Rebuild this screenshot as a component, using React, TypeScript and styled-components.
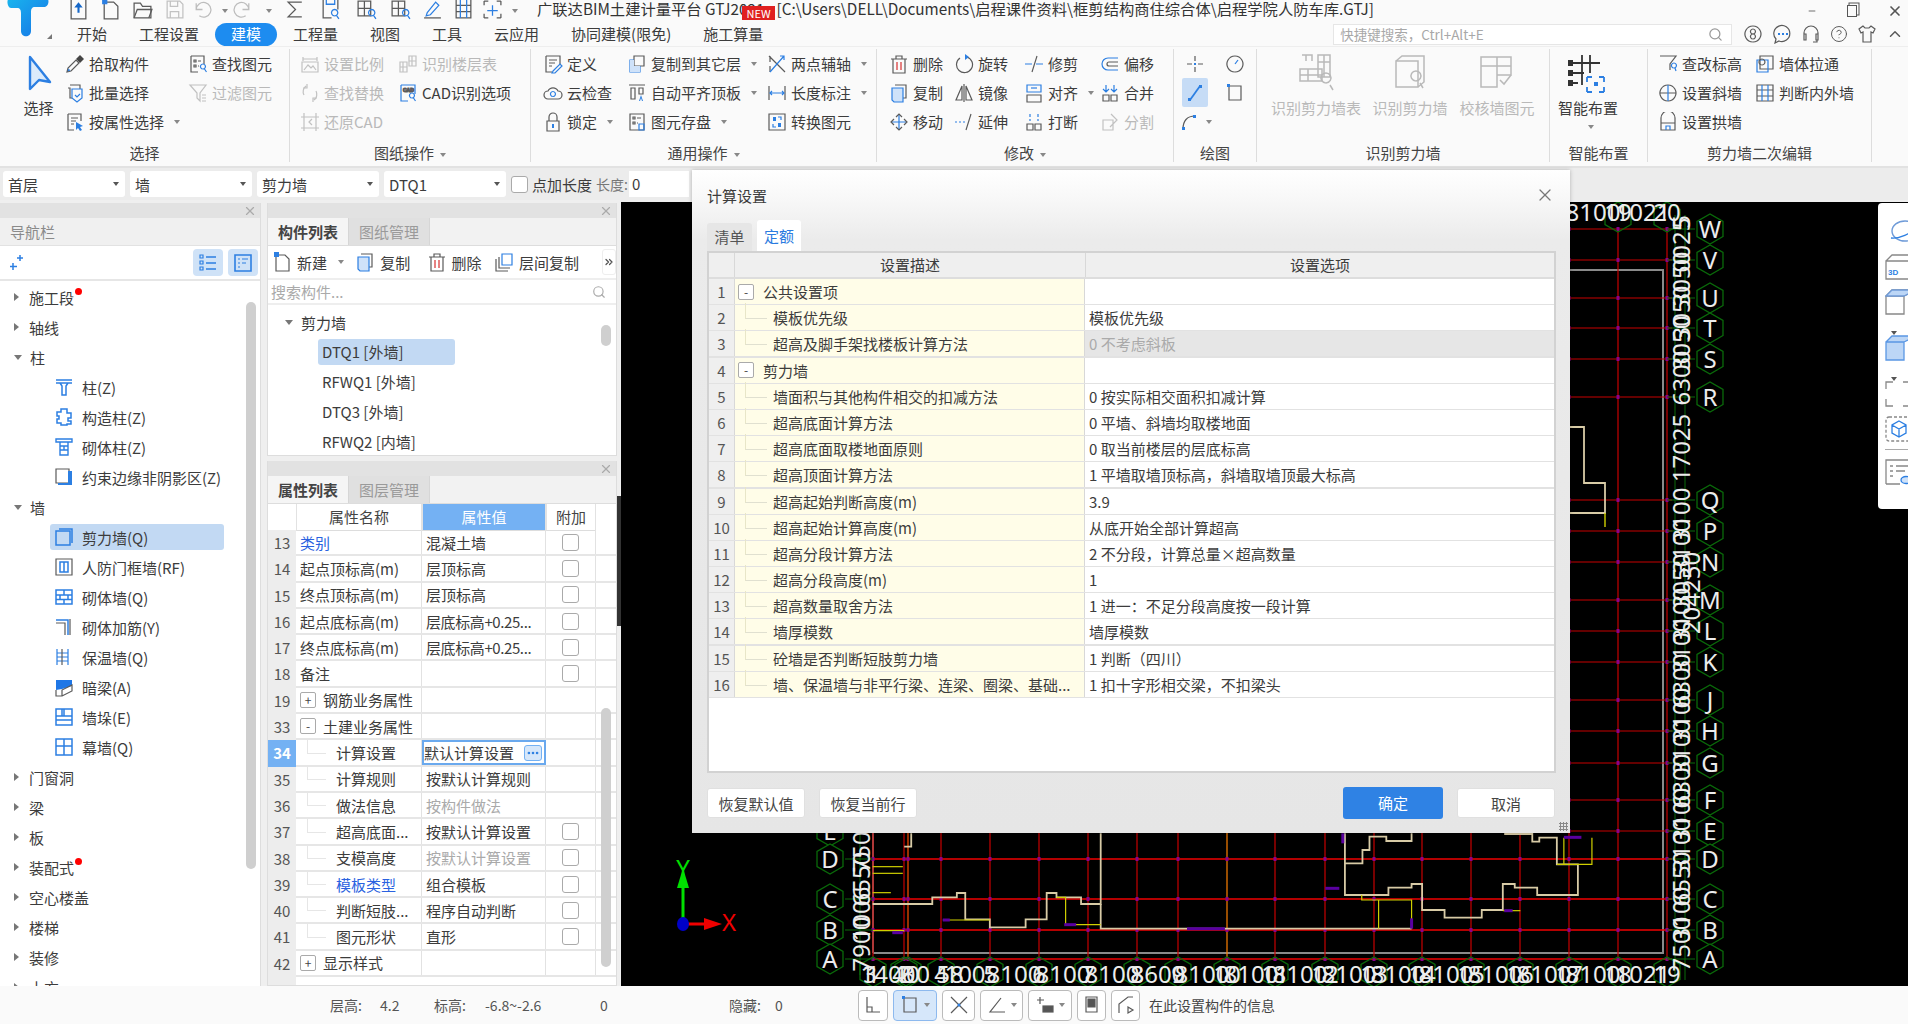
import React from 'react';
import styled, { createGlobalStyle } from 'styled-components';
import { X, Search, Minus, ChevronUp, HelpCircle, Ellipsis, ChevronsRight } from 'lucide-react';

const GRAY = '#5a5a5a';
const BLUE = '#2c7fe2';
const FONT = '"Noto Sans CJK SC", "Noto Sans", sans-serif';

const Global = createGlobalStyle`
    html, body { margin: 0; padding: 0; background: #efefef; }
    body { font-family: ${FONT}; color: #3c3c3c; font-size: 15px; }
    * { box-sizing: border-box; }
`;

const p = (d: string, c: string = GRAY, w?: number) => <path d={d} stroke={c} strokeWidth={w} />;
const f = (d: string, c: string = BLUE) => <path d={d} fill={c} stroke="none" />;

const icons: Record<string, React.ReactNode> = {
    pick: <>{p('M2 18l1-4 8-8 3 3-8 8z')}{f('M11 5l4-4 4 4-4 4z', '#444')}{f('M2.5 17.5l1-3 2 2z')}</>,
    batch: <>{p('M5 2h10v4M3 5h2v10h2')}{p('M7 6h10v9l-5 4-5-4z', BLUE)}{p('M10 12l2 2 3-3', BLUE)}</>,
    propSel: <>{p('M3 2h13v7M3 2v16h6M6 6h7M6 9h5M6 12h3')}{f('M11 10l7 4-3 1 2 3-2 1-2-3-2 2z')}</>,
    findEl: <>{p('M3 2h13v8M3 2v16h7M6 6h2v2H6zM6 11h2v2H6zM10 7h3M10 12h1')}{p('M15 15a2.5 2.5 0 1 0-.1 0M16.5 15l2 3', BLUE)}</>,
    filter: <>{p('M2 2h16l-6 8v8l-3-3v-5z')}{p('M14 12h4M14 15h4M14 18h4')}</>,
    scale: <>{p('M3 3v4M17 3v4M3 5h14M2 8h16v10H2zM4 16l4-5 3 3 2-2 3 4')}</>,
    layerTable: <>{p('M2 8h7v10H2zM2 13h7M5 8v10M11 2h7v10h-7zM11 7h7M14 2v10')}</>,
    replace: <>{p('M4 12a7 7 0 0 1 2-9M16 8a7 7 0 0 1-2 9M7 1v4H3M13 19v-4h4')}</>,
    cad: <>{p('M3 2h14v9M3 2v16h7', BLUE)}<text x="5" y="8.5" fontSize="5" fill={BLUE} fontFamily="Liberation Sans" fontWeight="700">CAD</text>{p('M14 15a2.5 2.5 0 1 0-.1 0M15.5 15l2 3', BLUE)}</>,
    restore: <>{p('M1 5h18M1 16h18M4 1v18M16 1v18M12 7l-3 3 3 3')}</>,
    define: <>{p('M3 2h14v8M3 2v16h6M6 6h8M6 9h6M6 12h3')}{p('M10 17l7-7 2 2-7 7-3 0z', BLUE)}</>,
    cloud: <>{p('M5 16a4 4 0 0 1 0-8 5.5 5.5 0 0 1 10 0 4 4 0 0 1 0 8z')}{p('M10 13.5a2.5 2.5 0 1 0-.1 0', BLUE)}</>,
    lock: <>{p('M4 9h12v10H4zM6 9V5a4 4 0 0 1 8 0v4')}{f('M9 12h2v4H9z')}</>,
    copyTo: <>{p('M7 2h10v10H7z')}{p('M7 6H3v12h10v-6', BLUE)}{f('M3 6h4v6h6v6H3z', '#cfe2f9')}</>,
    autoTop: <>{p('M2 2h16M4 5h4v11H4zM12 5h4v6h-4z')}{f('M12 18l2-6 2 6h-1l-1-3-1 3z')}</>,
    store: <>{p('M3 2h14v16H3zM6 5h2v2H6zM6 10h2v2H6zM10 6h4M10 11h1')}{p('M12 12h5v6h-5z', BLUE)}</>,
    axis: <>{p('M3 2v6M3 12v6M2 2l16 16', GRAY)}{p('M3 18L17 2M13 2h4v4', BLUE)}</>,
    measure: <>{p('M2 3v14M18 3v14')}{p('M3 10h14M5 8l-2 2 2 2M15 8l2 2-2 2', BLUE)}</>,
    convert: <>{p('M2 2h16v16H2z')}{f('M6 5h3v4H6zM11 11h3v4h-3z')}{p('M11 5h3v3M9 15H6v-3', BLUE)}</>,
    del: <>{p('M4 5h12v14H4zM2 5h16M7 5V2h6v3')}{p('M8 8v8M12 8v8', '#d83030')}</>,
    rotate: <>{p('M13 3a8 8 0 1 1-7 1', GRAY)}{f('M11 0l4 3-4 3z')}</>,
    trim: <>{p('M1 10h7M12 10h7', BLUE)}{p('M13 2L8 18')}</>,
    offset: <>{p('M18 4H8a6 6 0 0 0 0 12h10', BLUE)}{p('M18 8H9a2 2 0 0 0 0 4h9')}</>,
    copy: <>{p('M6 2h11v13h-3')}{f('M3 5h11v14H5l-2-2z', '#cfe2f9')}{p('M3 5h11v14H5l-2-2z', BLUE)}</>,
    mirror: <>{p('M10 1v18M8 3L2 17h6zM12 3l6 14h-6z')}</>,
    align: <>{p('M3 2h14v7H3z', BLUE)}{p('M3 12h14v7H3z')}{p('M7 5h6', BLUE)}</>,
    merge: <>{p('M3 12h6v6H3zM11 12h6v6h-6z')}{p('M6 2v6M14 2v6M3 6l3 3 3-3M11 6l3 3 3-3', BLUE)}</>,
    move: <>{p('M10 2v16M2 10h16', BLUE)}{p('M7 5l3-3 3 3M7 15l3 3 3-3M5 7l-3 3 3 3M15 7l3 3-3 3')}</>,
    extend: <>{p('M1 10h2M5 10h2M9 10h2', BLUE)}{p('M17 2l-5 16')}</>,
    breakAt: <>{p('M3 12h6v6H3zM11 12h6v6h-6z')}{p('M6 2v3M6 7v2M14 2v3M14 7v2', BLUE)}</>,
    split: <>{p('M3 8h10v10H3zM11 2l6 6-7 7')}</>,
    cross: <>{p('M10 2v5M10 13v5M2 10h5M13 10h5')}{f('M9 9h2v2H9z')}</>,
    clock: <>{p('M10 18a8 8 0 1 0-.1 0')}{p('M10 10l3-4', BLUE)}</>,
    line: <>{p('M5 17L15 3', BLUE, 1.8)}{f('M3 15h3v3H3zM14 2h3v3h-3z')}</>,
    rect: <>{p('M4 3h12v14H4z')}{f('M2 1h3v3H2z')}</>,
    arc: <>{p('M4 17C4 9 8 4 16 4', GRAY)}{f('M3 15h3v3H3zM14 3h3v3h-3z')}</>,
    changeElev: <>{p('M2 2h16l-6 8v6')}{p('M16 14a2.5 2.5 0 1 0-.1 0M17 14l1 3', BLUE)}</>,
    pullWall: <>{p('M5 2h13v13H5z')}{p('M2 6h11v12H2z', BLUE)}{p('M7 11a3 3 0 1 0-.1 0')}</>,
    slopeWall: <>{p('M10 18a8 8 0 1 0-.1 0M2 10h16')}{p('M10 2v16', BLUE)}</>,
    inOut: <>{p('M2 2h16v16H2zM2 7h16M2 13h16')}{p('M7 2v16M13 2v16', BLUE)}</>,
    arch: <>{p('M3 18V6a7 7 0 0 1 14 0v12zM3 11h14')}{p('M8 18v-4h4v4', BLUE)}</>,
    newDoc: <>{p('M4 3h9l4 4v12H4z')}{f('M2 0h5v5H2z')}</>,
    layerCopy: <>{p('M2 7v12h12')}{p('M5 5v11h11')}{p('M8 2h10v11H8z', BLUE)}</>,
    listView: <>{p('M8 4h10M8 10h10M8 16h10', BLUE, 1.6)}{p('M2 2h3v3H2zM2 8h3v3H2zM2 14h3v3H2z', BLUE)}</>,
    detailView: <>{p('M2 2h16v16H2z', BLUE, 1.6)}{p('M5 6h2M9 6h6M5 10h2M9 10h4M5 14h2', BLUE)}</>,
    spark: <>{p('M13 2v6M10 5h6M6 10v7M3 13.5h7', BLUE, 1.5)}</>,
    column: <>{p('M2 3h16M2 6h16M6 6l2 3v9h4V9l2-3', BLUE, 1.5)}</>,
    gear: <>{p('M7 2h6v4h4v5h-3v3h3v3h-4v1H7v-2H3v-4h2V9H3V5h4z', BLUE, 1.5)}</>,
    brick: <>{p('M2 2h16v3H2zM6 5h8v13H6zM6 9h8M6 13h8M10 9v4', BLUE, 1.4)}</>,
    edge: <>{p('M2 2h13v14H2z')}{f('M14 4h4v14H4v-2h10z')}</>,
    wall: <>{p('M5 2h13v14M2 4h14v14H2z', BLUE, 1.5)}</>,
    door: <>{p('M2 2h16v16H2z', GRAY)}{p('M6 5h8v10H6zM10 5v10', BLUE, 1.5)}</>,
    masonry: <>{p('M2 3h16v14H2zM2 8h16M2 12.5h16M10 3v5M6 8v4.5M14 8v4.5M10 12.5V17', BLUE, 1.5)}</>,
    rebar: <>{p('M2 3h12v15', BLUE, 1.5)}{p('M2 6h9v12M16 2v16', GRAY)}</>,
    insul: <>{p('M3 2v16M14 2v16M3 6h11M3 10h11M3 14h11', BLUE)}{p('M8 2v16', GRAY)}</>,
    beam: <>{f('M2 3h16v6L8 12l-6 1z', '#1f77e6')}{p('M2 13v6h6v-6l10-5v6l-10 5')}</>,
    pier: <>{p('M2 2h16v16H2zM2 9h16M2 13h16M10 2v7M8 2v7', BLUE, 1.5)}</>,
    curtain: <>{p('M2 2h16v16H2zM2 9h16M10 2v16', BLUE, 1.5)}</>,
    upload: <>{p('M3 0v19h14V0', GRAY)}{f('M10 3l4 5h-3v5H9V8H6z', '#1467c9')}</>,
    folder: <>{p('M2 4h6l2 3h8v11H2z')}{p('M2 18l3-8h14l-3 8')}</>,
    save: <>{p('M3 2h12l3 3v13H3zM6 2v5h7V2M6 18v-6h8v6', '#c2c2c2')}</>,
    undo: <>{p('M4 10a7 7 0 1 1 3 6M4 4v6h6', '#bdbdbd')}</>,
    redo: <>{p('M16 10a7 7 0 1 0-3 6M16 4v6h-6', '#bdbdbd')}</>,
    sigma: <>{p('M16 3H3l7 7-7 7h13')}</>,
    docSearch: <>{p('M3 0v18h8M17 0v10')}{p('M6 0h8v5H6z', BLUE)}{p('M14 16a3 3 0 1 0-.1 0M16 16l2 3', BLUE)}</>,
    gridSearch: <>{p('M2 2h12v14H2zM2 9h12M8 2v14')}{p('M15 16a3 3 0 1 0-.1 0M17 16l2 3', BLUE)}</>,
    pen: <>{p('M2 18h16')}{p('M5 13l8-10 3 3-8 9-4 1z', BLUE)}</>,
    film: <>{p('M3 0v18h14V0M3 6h14M3 12h14')}{p('M7 0v18M13 0v18', BLUE)}</>,
    dashPlus: <>{p('M2 2h4M14 2h4M2 18h4M14 18h4M2 2v4M18 2v4M2 14v4M18 14v4')}{p('M10 6v10M5 11h10', BLUE)}</>,
    badge: <>{p('M10 18a8 8 0 1 0-.1 0')}{p('M10 10a2.5 2.5 0 1 0-.1 0M10 15a2.5 2.5 0 1 0-.1 0')}</>,
    chat: <>{p('M4 15l-1 4 4-2a8 8 0 1 0-3-2z')}{f('M6 9h2v2H6zM10 9h2v2h-2zM14 9h2v2h-2z', BLUE)}</>,
    headset: <>{p('M3 13V9a7 7 0 0 1 14 0v4M3 10h2v6H3zM15 10h2v6h-2zM16 16v2h-4')}</>,
    shirt: <>{p('M6 2L2 5l2 4 2-1v10h8V8l2 1 2-4-4-3-2 2H8z')}</>,
};

const bigIcons: Record<string, React.ReactNode> = {
    wallTable: <>{p('M6 2h10v6M10 2v6M22 2h12v22H22zM22 9h12M28 2v22M4 16h22v12H4zM4 22h22M12 16v12')}{p('M30 30a5 5 0 1 0-.1 0M34 32l3 5')}</>,
    wallFind: <>{p('M6 8h22v26H6zM6 8l6-5h22v26l-6 5')}{p('M26 28a5 5 0 1 0-.1 0M30 30l3 5')}</>,
    wallCheck: <>{p('M4 4h30v18H20v12H4zM4 13h16M20 4v18M20 13h14')}{p('M23 27l4 4 7-9')}</>,
    smart: <>{p('M2 10h30M2 20h14M2 30h8M14 2v30M22 2v18', '#333', 1.8)}{f('M0 7h5v6H0zM0 17h5v6H0zM0 27h5v6H0z', '#333')}{p('M19 24h5M31 24h5M36 24v5M36 34v5M31 39h5M19 39h5M19 34v5M19 24v5', BLUE, 1.8)}{f('M26 29h4v4h-4z')}</>,
};

const Ico = ({ name, size = 20 }: { name: string; size?: number }): JSX.Element => (
    <svg width={size} height={size} viewBox="0 0 20 20" fill="none" stroke={GRAY} strokeWidth={1.2} style={{ flex: 'none' }}>
        {icons[name]}
    </svg>
);

const ribbon = [
    {
        label: '选择', w: 290, pad: 12,
        cols: [
            { w: 53, big: 'select', text: '选择' },
            { w: 123, items: [['pick', '拾取构件'], ['batch', '批量选择'], ['propSel', '按属性选择', 'caret']] },
            { w: 100, items: [['findEl', '查找图元'], ['filter', '过滤图元', 'off']] },
        ],
    },
    {
        label: '图纸操作', caret: true, w: 241, pad: 10,
        cols: [
            { w: 98, items: [['scale', '设置比例', 'off'], ['replace', '查找替换', 'off'], ['restore', '还原CAD', 'off']] },
            { w: 120, items: [['layerTable', '识别楼层表', 'off'], ['cad', 'CAD识别选项']] },
        ],
    },
    {
        label: '通用操作', caret: true, w: 346, pad: 12,
        cols: [
            { w: 84, items: [['define', '定义'], ['cloud', '云检查'], ['lock', '锁定', 'caret']] },
            { w: 140, items: [['copyTo', '复制到其它层', 'caret'], ['autoTop', '自动平齐顶板', 'caret'], ['store', '图元存盘', 'caret']] },
            { w: 100, items: [['axis', '两点辅轴', 'caret'], ['measure', '长度标注', 'caret'], ['convert', '转换图元']] },
        ],
    },
    {
        label: '修改', caret: true, w: 297, pad: 12,
        cols: [
            { w: 65, items: [['del', '删除'], ['copy', '复制'], ['move', '移动']] },
            { w: 70, items: [['rotate', '旋转'], ['mirror', '镜像'], ['extend', '延伸']] },
            { w: 76, items: [['trim', '修剪'], ['align', '对齐', 'caret'], ['breakAt', '打断']] },
            { w: 60, items: [['offset', '偏移'], ['merge', '合并'], ['split', '分割', 'off']] },
        ],
    },
];

const rightGroups = [
    {
        label: '识别剪力墙', w: 293, pad: 11,
        cols: [
            { w: 96, big: 'wallTable', text: '识别剪力墙表', off: true },
            { w: 92, big: 'wallFind', text: '识别剪力墙', off: true },
            { w: 82, big: 'wallCheck', text: '校核墙图元', off: true },
        ],
    },
    { label: '智能布置', w: 98, pad: 3, cols: [{ w: 70, big: 'smart', text: '智能布置', more: true }] },
    {
        label: '剪力墙二次编辑', w: 224, pad: 10,
        cols: [
            { w: 97, items: [['changeElev', '查改标高'], ['slopeWall', '设置斜墙'], ['arch', '设置拱墙']] },
            { w: 110, items: [['pullWall', '墙体拉通'], ['inOut', '判断内外墙']] },
        ],
    },
];

const navTree: [string, string, string?, boolean?][] = [
    ['root', '施工段', 'closed', true],
    ['root', '轴线', 'closed'],
    ['root', '柱', 'open'],
    ['column', '柱(Z)'],
    ['gear', '构造柱(Z)'],
    ['brick', '砌体柱(Z)'],
    ['edge', '约束边缘非阴影区(Z)'],
    ['root', '墙', 'open'],
    ['wall', '剪力墙(Q)', 'active'],
    ['door', '人防门框墙(RF)'],
    ['masonry', '砌体墙(Q)'],
    ['rebar', '砌体加筋(Y)'],
    ['insul', '保温墙(Q)'],
    ['beam', '暗梁(A)'],
    ['pier', '墙垛(E)'],
    ['curtain', '幕墙(Q)'],
    ['root', '门窗洞', 'closed'],
    ['root', '梁', 'closed'],
    ['root', '板', 'closed'],
    ['root', '装配式', 'closed', true],
    ['root', '空心楼盖', 'closed'],
    ['root', '楼梯', 'closed'],
    ['root', '装修', 'closed'],
    ['root', '土方', 'closed'],
];

type PropRow = { no: number; name: string; value?: string; check?: boolean; kind?: string; link?: boolean; dim?: boolean; sel?: boolean; tight?: boolean };

const propRows: PropRow[] = [
    { no: 13, name: '类别', value: '混凝土墙', check: true, link: true },
    { no: 14, name: '起点顶标高(m)', value: '层顶标高', check: true },
    { no: 15, name: '终点顶标高(m)', value: '层顶标高', check: true },
    { no: 16, name: '起点底标高(m)', value: '层底标高+0.25...', check: true, tight: true },
    { no: 17, name: '终点底标高(m)', value: '层底标高+0.25...', check: true, tight: true },
    { no: 18, name: '备注', check: true },
    { no: 19, name: '钢筋业务属性', kind: '+' },
    { no: 33, name: '土建业务属性', kind: '-' },
    { no: 34, name: '计算设置', value: '默认计算设置', kind: 'child', sel: true },
    { no: 35, name: '计算规则', value: '按默认计算规则', kind: 'child' },
    { no: 36, name: '做法信息', value: '按构件做法', kind: 'child', dim: true },
    { no: 37, name: '超高底面...', value: '按默认计算设置', kind: 'child', check: true },
    { no: 38, name: '支模高度', value: '按默认计算设置', kind: 'child', check: true, dim: true },
    { no: 39, name: '模板类型', value: '组合模板', kind: 'child', check: true, link: true },
    { no: 40, name: '判断短肢...', value: '程序自动判断', kind: 'child', check: true },
    { no: 41, name: '图元形状', value: '直形', kind: 'child', check: true },
    { no: 42, name: '显示样式', kind: '+' },
];

const calcRows: [string, string, string?][] = [
    ['公共设置项', '', 'group'],
    ['模板优先级', '模板优先级'],
    ['超高及脚手架找楼板计算方法', '0 不考虑斜板', 'off'],
    ['剪力墙', '', 'group'],
    ['墙面积与其他构件相交的扣减方法', '0 按实际相交面积扣减计算'],
    ['超高底面计算方法', '0 平墙、斜墙均取楼地面'],
    ['超高底面取楼地面原则', '0 取当前楼层的层底标高'],
    ['超高顶面计算方法', '1 平墙取墙顶标高，斜墙取墙顶最大标高'],
    ['超高起始判断高度(m)', '3.9'],
    ['超高起始计算高度(m)', '从底开始全部计算超高'],
    ['超高分段计算方法', '2 不分段，计算总量×超高数量'],
    ['超高分段高度(m)', '1'],
    ['超高数量取舍方法', '1 进一：不足分段高度按一段计算'],
    ['墙厚模数', '墙厚模数'],
    ['砼墙是否判断短肢剪力墙', '1 判断（四川）'],
    ['墙、保温墙与非平行梁、连梁、圈梁、基础...', '1 扣十字形相交梁，不扣梁头'],
];

// plan coordinates of the grid, in page pixels
const gridX = [873, 904, 908, 941, 990, 1039, 1088, 1137, 1178, 1227, 1275, 1325, 1374, 1422, 1471, 1520, 1569, 1618, 1667];
const gridY: [string, number][] = [
    ['W', 229], ['V', 260], ['U', 298], ['T', 328], ['S', 359], ['R', 397], ['Q', 500], ['P', 531], ['N', 562], ['M', 600],
    ['L', 631], ['K', 662], ['J', 700], ['H', 731], ['G', 763], ['F', 800], ['E', 831], ['D', 859], ['C', 899], ['B', 930], ['A', 959],
];
const bottomDims: [number, string][] = [
    [870, '3'], [888, '1400'], [906, '40'], [923, '0'], [950, '58'], [965, '100'], [1014, '8100'], [1063, '8100'], [1112, '8100'],
    [1158, '8600'], [1202, '8100'], [1251, '8100'], [1300, '8100'], [1349, '8100'], [1398, '8100'], [1446, '8100'], [1495, '8100'],
    [1544, '8100'], [1593, '8100'], [1643, '1021'],
];
const rightDims: [number, string][] = [
    [222, '5'], [245, '0025'], [279, '3050'], [313, '3050'], [343, '3050'], [378, '6300'], [448, '17025'], [515, '3100'],
    [546, '3100'], [581, '3050'], [615, '3100'], [646, '3100'], [681, '6300'], [715, '3100'], [747, '3100'], [781, '6300'],
    [815, '3100'], [845, '3100'], [879, '6550'], [914, '3100'], [944, '7500'],
];
const leftDims: [number, string][] = [[845, '7500'], [879, '6550'], [914, '1006'], [944, '7900']];

const toPoints = (pts: number[][]) => pts.map(([x, y]) => `${620 + x / 1.425},${820 + y / 3}`).join(' ');

const walls = [
    [[360, 252], [445, 252], [445, 232], [480, 232], [480, 219], [492, 219], [492, 298], [527, 298], [527, 322], [578, 322], [578, 298], [608, 298], [608, 219], [622, 219], [622, 232], [657, 232], [657, 252], [685, 252], [685, 40]],
    [[685, 252], [685, 326], [1128, 326]],
    [[1033, 40], [1033, 225], [1095, 225], [1095, 203], [1128, 203], [1128, 192], [1143, 192], [1143, 270], [1175, 270], [1175, 293], [1228, 293], [1228, 270], [1258, 270], [1258, 192], [1275, 192], [1275, 203], [1307, 203], [1307, 225], [1365, 225], [1365, 133], [1335, 133], [1335, 53], [1310, 53], [1310, 65], [1300, 65], [1300, 42], [1260, 42]],
    [[1033, 130], [1058, 130], [1058, 90], [1068, 90], [1068, 50], [1092, 50], [1092, 63], [1128, 63], [1128, 40]],
    [[415, 40], [415, 80], [405, 80]],
];
const yellows = [
    [[360, 140], [403, 140]], [[360, 160], [403, 160]], [[360, 218], [386, 218]], [[360, 332], [405, 332]],
    [[1057, 225], [1057, 240], [1128, 240], [1128, 326]], [[1081, 240], [1081, 326]], [[622, 232], [635, 232], [635, 314], [685, 314]],
    [[1345, 53], [1345, 133]], [[1385, 53], [1385, 133], [1335, 133]], [[460, 300], [527, 300]], [[1258, 272], [1283, 272]],
];
const purples = [
    [[808, 326], [862, 326]], [[633, 314], [650, 314]], [[1005, 205], [1025, 205]], [[388, 338], [403, 338]], [[460, 300], [470, 300]],
    [[1345, 52], [1370, 52]], [[1260, 272], [1272, 272]], [[1128, 295], [1128, 326]], [[1030, 40], [1030, 70]],
];

const hexPoints = (cx: number, cy: number, r = 15) =>
    [0, 60, 120, 180, 240, 300].map(a => {
        const t = ((a + 30) * Math.PI) / 180;
        return `${cx + r * Math.cos(t)},${cy + r * Math.sin(t)}`;
    }).join(' ');

const Drawing = (): JSX.Element => (
    <CanvasSvg viewBox="621 202 1287 784" width="1287" height="784" fill="none">
        <polyline points="873,953 873,270 1663,270 1663,953 873,953" stroke="#8a8a8a" strokeWidth="2" />
        {gridY.map(([, y]) => (
            <line key={y} x1="873" x2="1672" y1={y} y2={y} stroke={y > 850 ? '#f00000' : '#c80000'} strokeWidth={y > 850 ? 1.6 : 1.2} />
        ))}
        {gridX.map((x, i) => (
            <line key={x} x1={x} x2={x} y1="229" y2="959" stroke={i === 2 ? '#ff5000' : i === 9 ? '#ff8000' : '#c80000'} strokeWidth="1.2" />
        ))}
        {gridX.flatMap(x => gridY.map(([, y]) => (
            <rect key={`${x}-${y}`} x={x - 1.5} y={y - 2} width="3" height="4" fill="#8a008a" />
        )))}
        {walls.map((w, i) => <polyline key={i} points={toPoints(w)} stroke="#d8cba6" strokeWidth="1.8" />)}
        <polyline points="1570,427 1584,427 1584,483 1605,483 1605,513 1570,513" stroke="#d8cba6" strokeWidth="1.8" />
        <polyline points="1605,513 1605,527" stroke="#d0d000" strokeWidth="1.4" />
        {yellows.map((w, i) => <polyline key={i} points={toPoints(w)} stroke="#d0d000" strokeWidth="1.2" />)}
        {purples.map((w, i) => <polyline key={i} points={toPoints(w)} stroke="#5a00a0" strokeWidth="3" />)}

        <line x1="1675" x2="1675" y1="215" y2="980" stroke="#0a6a0a" />
        <line x1="1685" x2="1685" y1="215" y2="980" stroke="#0a6a0a" />
        <line x1="860" x2="860" y1="835" y2="975" stroke="#0a6a0a" />
        {gridY.map(([name, y]) => (
            <g key={name}>
                <line x1="1667" x2="1695" y1={y} y2={y} stroke="#0a6a0a" />
                <polygon points={hexPoints(1710, y)} stroke="#0a6a0a" strokeWidth="1.3" fill="#000" />
                <AxisText x="1710" y={y + 9} textAnchor="middle">{name}</AxisText>
                {y > 820 && (
                    <>
                        <line x1="845" x2="873" y1={y} y2={y} stroke="#0a6a0a" />
                        <polygon points={hexPoints(830, y)} stroke="#0a6a0a" strokeWidth="1.3" fill="#000" />
                        <AxisText x="830" y={y + 9} textAnchor="middle">{name}</AxisText>
                    </>
                )}
            </g>
        ))}
        {gridX.map((x, i) => (
            <g key={x}>
                <polygon points={hexPoints(x, 972)} stroke="#0a6a0a" strokeWidth="1.3" />
                <AxisText x={x} y="983" textAnchor="middle">{i + 1}</AxisText>
                {x > 1570 && (
                    <>
                        <polygon points={hexPoints(x, 217)} stroke="#0a6a0a" strokeWidth="1.3" />
                        <AxisText x={x} y="221" textAnchor="middle">{i + 2}</AxisText>
                    </>
                )}
            </g>
        ))}
        {bottomDims.map(([x, t], i) => <AxisText key={i} x={x} y="983" textAnchor="middle">{t}</AxisText>)}
        <AxisText x="1593" y="221" textAnchor="middle">8100</AxisText>
        <AxisText x="1643" y="221" textAnchor="middle">1021</AxisText>
        {rightDims.map(([y, t]) => (
            <AxisText key={y} transform={`translate(1690 ${y}) rotate(-90)`} textAnchor="middle">{t}</AxisText>
        ))}
        <AxisText transform="translate(1700 593) rotate(-90)" textAnchor="middle">204250</AxisText>
        {leftDims.map(([y, t]) => (
            <AxisText key={y} transform={`translate(870 ${y}) rotate(-90)`} textAnchor="middle">{t}</AxisText>
        ))}

        <line x1="683" x2="683" y1="885" y2="925" stroke="#00e000" strokeWidth="3" />
        <polygon points="683,868 677,888 689,888" fill="#00e000" />
        <line x1="683" x2="708" y1="924" y2="924" stroke="#f00000" strokeWidth="3" />
        <polygon points="722,924 704,918 704,930" fill="#f00000" />
        <ellipse cx="683" cy="924" rx="6" ry="7" fill="#0000c8" />
        <AxisLetter x="683" y="877" fill="#00e000" textAnchor="middle">Y</AxisLetter>
        <AxisLetter x="729" y="931" fill="#f00000" textAnchor="middle">X</AxisLetter>
    </CanvasSvg>
);

const RibbonCol = ({ col }: { col: any }): JSX.Element => {
    if (col.big) {
        return (
            <BigBtn $w={col.w} $off={col.off}>
                <BigIconSlot>
                    {col.big === 'select' ? (
                        <svg width="30" height="36" viewBox="0 0 30 36">
                            <path d="M6 2l20 25-11-2-9 9z" fill="#dcebfb" stroke={BLUE} strokeWidth="2.4" strokeLinejoin="round" />
                        </svg>
                    ) : (
                        <svg width="40" height="40" viewBox="0 0 40 40" fill="none" stroke={GRAY} strokeWidth={1.5}>
                            {bigIcons[col.big]}
                        </svg>
                    )}
                </BigIconSlot>
                <span>{col.text}</span>
                {col.more && <MoreCaret><Caret /></MoreCaret>}
            </BigBtn>
        );
    }
    return (
        <Col $w={col.w}>
            {col.items.map(([icon, text, flag]: string[]) => (
                <Item key={text} $off={flag === 'off'}>
                    <Ico name={icon} />
                    <span>{text}</span>
                    {flag === 'caret' && <Caret />}
                </Item>
            ))}
        </Col>
    );
};

const RibbonGroup = ({ g }: { g: any }): JSX.Element => (
    <Group $w={g.w}>
        <GroupBody $pad={g.pad}>
            {g.cols.map((c: any, i: number) => <RibbonCol key={i} col={c} />)}
        </GroupBody>
        <GroupLabel>{g.label}{g.caret && <Caret />}</GroupLabel>
    </Group>
);

const qat: [string, number][] = [
    ['upload', 32], ['newDoc', 32], ['folder', 32], ['save', 32], ['undo', 24], ['', 16], ['redo', 24], ['', 24],
    ['sigma', 34], ['docSearch', 36], ['gridSearch', 36], ['gridSearch', 32], ['pen', 32], ['film', 30], ['dashPlus', 28],
];

const menus = ['开始', '工程设置', '建模', '工程量', '视图', '工具', '云应用', '协同建模(限免)', '施工算量'];

const App = (): JSX.Element => (
    <Page>
        <Global />
        <Head>
            <LogoCol>
                <svg width="44" height="38" viewBox="0 0 44 38">
                    <defs>
                        <linearGradient id="logoGrad" x1="0" y1="0" x2="1" y2="1">
                            <stop offset="0" stopColor="#19b5ee" />
                            <stop offset="1" stopColor="#1673e6" />
                        </linearGradient>
                    </defs>
                    <path d="M3 -2h36c4 0 3 9-2 9H28c-3 0-4 2-4 5v19c0 7-10 7-10 0V13c0-3-1-5-4-5H4C0 8-1-2 3-2z" fill="url(#logoGrad)" />
                </svg>
                <LogoMark />
            </LogoCol>
            <HeadRows>
                <TitleRow>
                    <Qat>
                        {qat.map(([name, w], i) => (
                            <QatSlot key={i} $w={w}>{name ? <Ico name={name} size={21} /> : <Caret />}</QatSlot>
                        ))}
                        <Caret />
                    </Qat>
                    <Title>广联达BIM土建计量平台 GTJ2021 - [C:\Users\DELL\Documents\启程课件资料\框剪结构商住综合体\启程学院人防车库.GTJ]</Title>
                    <NewBadge>NEW</NewBadge>
                    <WindowBtns>
                        <Minus size={10} />
                        <RestoreIcon />
                        <X size={16} strokeWidth={2.5} />
                    </WindowBtns>
                </TitleRow>
                <MenuRow>
                    {menus.map(m => <MenuTab key={m} $on={m === '建模'}>{m}</MenuTab>)}
                    <KeySearch>
                        快捷键搜索，Ctrl+Alt+E
                        <Search size={15} color="#999" />
                    </KeySearch>
                    <HelpIcons>
                        <Ico name="badge" />
                        <Ico name="chat" />
                        <Ico name="headset" />
                        <HelpCircle size={18} color={GRAY} strokeWidth={1.3} />
                        <Ico name="shirt" />
                        <ChevronUp size={18} color={GRAY} />
                    </HelpIcons>
                </MenuRow>
            </HeadRows>
        </Head>

        <Ribbon>
            {ribbon.map(g => <RibbonGroup key={g.label} g={g} />)}
            <Group $w={83}>
                <DrawGrid>
                    <DrawBtn><Ico name="cross" /></DrawBtn>
                    <DrawBtn><Ico name="clock" /></DrawBtn>
                    <DrawBtn $on><Ico name="line" /></DrawBtn>
                    <DrawBtn><Ico name="rect" /></DrawBtn>
                    <DrawBtn><Ico name="arc" /><Caret /></DrawBtn>
                </DrawGrid>
                <GroupLabel>绘图</GroupLabel>
            </Group>
            {rightGroups.map(g => <RibbonGroup key={g.label} g={g} />)}
        </Ribbon>

        <FilterBar>
            <Select>首层<Caret $dark /></Select>
            <Select>墙<Caret $dark /></Select>
            <Select>剪力墙<Caret $dark /></Select>
            <Select>DTQ1<Caret $dark /></Select>
            <CheckBox />
            <PointLabel>点加长度</PointLabel>
            <LengthLabel>长度:</LengthLabel>
            <LengthValue>0</LengthValue>
        </FilterBar>

        <Work>
            <NavPanel>
                <PanelBar><X size={14} color="#aaa" /></PanelBar>
                <NavTitle>导航栏</NavTitle>
                <NavTools>
                    <Ico name="spark" />
                    <NavToolBtn $first><Ico name="listView" /></NavToolBtn>
                    <NavToolBtn><Ico name="detailView" /></NavToolBtn>
                </NavTools>
                <NavList>
                    {navTree.map(([icon, text, state, dot]) => (
                        icon === 'root' ? (
                            <NavRoot key={text}>
                                <Arrow $open={state === 'open'} />
                                {text}
                                {dot && <RedDot />}
                            </NavRoot>
                        ) : (
                            <NavChild key={text} $on={state === 'active'}>
                                <Ico name={icon} />
                                {text}
                            </NavChild>
                        )
                    ))}
                    <NavScroll />
                </NavList>
            </NavPanel>

            <MidCol>
                <CompPanel>
                    <PanelBar><X size={14} color="#aaa" /></PanelBar>
                    <Tabs>
                        <Tab $on>构件列表</Tab>
                        <Tab>图纸管理</Tab>
                    </Tabs>
                    <CompTools>
                        <CompTool $w={84}><Ico name="newDoc" />新建<Caret /></CompTool>
                        <CompTool $w={72}><Ico name="copy" />复制</CompTool>
                        <CompTool $w={68}><Ico name="del" />删除</CompTool>
                        <CompTool $w={102}><Ico name="layerCopy" />层间复制</CompTool>
                        <MoreBtn><ChevronsRight size={12} strokeWidth={2.5} /></MoreBtn>
                    </CompTools>
                    <CompSearch>搜索构件...<Search size={14} color="#aaa" /></CompSearch>
                    <CompTree>
                        <CompHead><Arrow $open />剪力墙</CompHead>
                        <CompRow $on>DTQ1 [外墙]</CompRow>
                        <CompRow>RFWQ1 [外墙]</CompRow>
                        <CompRow>DTQ3 [外墙]</CompRow>
                        <CompRow>RFWQ2 [内墙]</CompRow>
                        <CompThumb />
                    </CompTree>
                </CompPanel>
                <PropPanel>
                    <PanelBar><X size={14} color="#aaa" /></PanelBar>
                    <Tabs>
                        <Tab $on>属性列表</Tab>
                        <Tab>图层管理</Tab>
                    </Tabs>
                    <PropHead>
                        <span />
                        <PropHeadCell>属性名称</PropHeadCell>
                        <PropHeadCell $on>属性值</PropHeadCell>
                        <PropHeadCell>附加</PropHeadCell>
                    </PropHead>
                    {propRows.map(r => (
                        <PropLine key={r.no}>
                            <PropNo $on={r.sel}>{r.no}</PropNo>
                            <PropName $kind={r.kind} $link={r.link}>
                                {(r.kind === '+' || r.kind === '-') && <Toggle>{r.kind}</Toggle>}
                                {r.name}
                            </PropName>
                            <PropValue $sel={r.sel} $dim={r.dim} $tight={r.tight}>
                                {r.value}
                                {r.sel && <EllipsisBtn><Ellipsis size={14} strokeWidth={2.5} /></EllipsisBtn>}
                            </PropValue>
                            <PropCheck>{r.check && <CheckBox />}</PropCheck>
                        </PropLine>
                    ))}
                    <PropGutter />
                    <PropScroll />
                </PropPanel>
            </MidCol>

            <Splitter><SplitGrip /></Splitter>

            <Canvas>
                <Drawing />
                <SideTools>
                    <SideIcon>
                        <svg width="30" height="24" viewBox="0 0 30 24" fill="none" stroke="#6f9bd8" strokeWidth="1.4">
                            <ellipse cx="20" cy="12" rx="13" ry="10" />
                            <path d="M6 19c8 1 20-4 26-12" stroke={BLUE} />
                        </svg>
                    </SideIcon>
                    <SideIcon>
                        <svg width="30" height="26" viewBox="0 0 30 26" fill="none" stroke="#888" strokeWidth="1.3">
                            <path d="M1 7h24v18H1zM1 7l6-6h24M25 7l6-6" />
                            <text x="3" y="21" fontSize="8" fontWeight="700" fill={BLUE} stroke="none" fontFamily="Liberation Sans">3D</text>
                        </svg>
                    </SideIcon>
                    <SideIcon>
                        <svg width="30" height="26" viewBox="0 0 30 26" fill="none" stroke="#888" strokeWidth="1.3">
                            <path d="M1 7h18v18H1zM1 7l6-6h24L19 7" fill="#fff" />
                            <path d="M1 7l6-6h24L19 7z" fill="#bcd6f6" stroke="#6f9bd8" />
                        </svg>
                    </SideIcon>
                    <SideCaret><Caret $dark /></SideCaret>
                    <SideIcon>
                        <svg width="30" height="26" viewBox="0 0 30 26" fill="#bcd6f6" stroke="#5a97e4" strokeWidth="1.3">
                            <path d="M1 7h18v18H1zM1 7l6-6h24L19 7" />
                        </svg>
                    </SideIcon>
                    <SideCaret><Caret $dark /></SideCaret>
                    <SideIcon>
                        <svg width="30" height="26" viewBox="0 0 30 26" fill="none" stroke="#888" strokeWidth="1.3">
                            <path d="M8 1H1v7M1 18v7h7M18 1h12M18 25h12" />
                        </svg>
                    </SideIcon>
                    <SideIcon>
                        <svg width="30" height="26" viewBox="0 0 30 26" fill="none" stroke="#888" strokeWidth="1.3" strokeDasharray="3 2">
                            <rect x="1" y="1" width="30" height="24" rx="3" />
                            <path d="M14 5l7 4v8l-7 4-7-4V9zM7 9l7 4 7-4M14 13v8" stroke={BLUE} strokeDasharray="none" />
                        </svg>
                    </SideIcon>
                    <SideRule />
                    <SideIcon>
                        <svg width="30" height="26" viewBox="0 0 30 26" fill="none" stroke="#888" strokeWidth="1.3">
                            <path d="M1 25V1h30M5 7h3M11 7h12M5 12h3M11 12h9M5 17h3M1 25h14" />
                            <ellipse cx="21" cy="21" rx="5" ry="3.5" stroke={BLUE} fill="#cfe2f9" />
                        </svg>
                    </SideIcon>
                </SideTools>
            </Canvas>
        </Work>

        <StatusBar>
            <StatusText $ml={330} $w={50}>层高:</StatusText>
            <StatusText $w={54}>4.2</StatusText>
            <StatusText $w={51}>标高:</StatusText>
            <StatusText $w={115}>-6.8~-2.6</StatusText>
            <StatusText $w={129}>0</StatusText>
            <StatusText $w={46}>隐藏:</StatusText>
            <StatusText $w={83}>0</StatusText>
            <ModeBtn $w={30}>
                <svg width="20" height="20" viewBox="0 0 20 20" fill="none" stroke={GRAY} strokeWidth="1.2"><path d="M4 2v15h13M4 12h5v5" /></svg>
            </ModeBtn>
            <ModeBtn $w={44} $on>
                <Ico name="rect" /><Caret />
            </ModeBtn>
            <ModeBtn $w={33}>
                <svg width="20" height="20" viewBox="0 0 20 20" fill="none" stroke={GRAY} strokeWidth="1.2"><path d="M2 2l16 16M18 2L2 18" /><circle cx="10" cy="10" r="1.5" fill={BLUE} stroke="none" /></svg>
            </ModeBtn>
            <ModeBtn $w={43}>
                <svg width="20" height="20" viewBox="0 0 20 20" fill="none" stroke={GRAY} strokeWidth="1.2"><path d="M14 3L3 17h15" /></svg><Caret />
            </ModeBtn>
            <ModeBtn $w={44}>
                <svg width="20" height="20" viewBox="0 0 20 20" fill="none" stroke={GRAY} strokeWidth="1.2"><path d="M5 2v7M2 5h7" /><rect x="8" y="11" width="10" height="6" fill="#555" /></svg><Caret />
            </ModeBtn>
            <ModeBtn $w={29}>
                <svg width="20" height="20" viewBox="0 0 20 20" fill="none" stroke={GRAY} strokeWidth="1.2"><path d="M4 2h11v15H4z" /><path d="M6 4h7v8H6z" fill="#555" /></svg>
            </ModeBtn>
            <ModeBtn $w={29}>
                <svg width="20" height="20" viewBox="0 0 20 20" fill="none" stroke={GRAY} strokeWidth="1.2"><path d="M3 18V9l9-7h5M12 12l5 3-5 3z" /></svg>
            </ModeBtn>
            <StatusHint>在此设置构件的信息</StatusHint>
        </StatusBar>

        <Dialog>
            <DialogTitle>
                计算设置
                <X size={20} color="#777" strokeWidth={1.5} />
            </DialogTitle>
            <DialogTabs>
                <DialogTab>清单</DialogTab>
                <DialogTab $on>定额</DialogTab>
            </DialogTabs>
            <CalcTable>
                <CalcHead>
                    <span />
                    <CalcHeadCell>设置描述</CalcHeadCell>
                    <CalcHeadCell>设置选项</CalcHeadCell>
                </CalcHead>
                {calcRows.map(([name, value, flag], i) => (
                    <CalcLine key={i}>
                        <CalcNo>{i + 1}</CalcNo>
                        <CalcDesc $group={flag === 'group'}>
                            {flag === 'group' && <Toggle>-</Toggle>}
                            {name}
                        </CalcDesc>
                        <CalcValue $off={flag === 'off'}>{value}</CalcValue>
                    </CalcLine>
                ))}
            </CalcTable>
            <DialogFoot>
                <FootBtn>恢复默认值</FootBtn>
                <FootBtn>恢复当前行</FootBtn>
                <FootSpacer />
                <FootBtn $primary>确定</FootBtn>
                <FootBtn>取消</FootBtn>
            </DialogFoot>
            <Grip />
        </Dialog>
    </Page>
);

const Page = styled.div`
    position: relative;
    width: 1908px;
    height: 1024px;
    overflow: hidden;
    background: #efefef;
`;

const Head = styled.div`
    display: flex;
    height: 46px;
    background: #fafafa;
`;

const LogoCol = styled.div`
    position: relative;
    width: 56px;
    padding-left: 7px;
    flex: none;
`;

const LogoMark = styled.i`
    position: absolute;
    left: 47px;
    top: 34px;
    border-style: solid;
    border-width: 0 0 5px 5px;
    border-color: transparent transparent #777 transparent;
`;

const HeadRows = styled.div`
    flex: 1;
    display: flex;
    flex-direction: column;
`;

const TitleRow = styled.div`
    display: flex;
    align-items: center;
    height: 22px;
    position: relative;
`;

const Qat = styled.div`
    display: flex;
    align-items: center;
    width: 481px;
    padding-left: 6px;
    height: 22px;
    flex: none;
    overflow: hidden;
    svg { margin-top: -3px; }
`;

const QatSlot = styled.div<{ $w: number }>`
    width: ${p => p.$w}px;
    display: flex;
    justify-content: center;
    flex: none;
`;

const Title = styled.div`
    margin-top: -6px;
    font-size: 15.3px;
    color: #333;
    white-space: nowrap;
`;

const NewBadge = styled.div`
    position: absolute;
    left: 686px;
    top: 6px;
    width: 33px;
    height: 14px;
    background: #e02020;
    color: #fff;
    font-size: 11px;
    line-height: 14px;
    text-align: center;
`;

const WindowBtns = styled.div`
    margin-left: auto;
    display: flex;
    align-items: center;
    gap: 30px;
    padding-right: 5px;
    color: #555;
`;

const RestoreIcon = styled.i`
    width: 10px;
    height: 12px;
    border: 1.5px solid #555;
    box-shadow: 2px -2px 0 -0.5px #fafafa, 2px -2px 0 0.5px #555;
`;

const MenuRow = styled.div`
    display: flex;
    align-items: center;
    height: 24px;
    padding-left: 5px;
`;

const MenuTab = styled.div<{ $on?: boolean }>`
    height: 23px;
    padding: 0 16px;
    line-height: 22px;
    font-size: 15px;
    border-radius: 12px;
    color: ${p => (p.$on ? '#fff' : '#3c3c3c')};
    background: ${p => (p.$on ? '#1d8cf0' : 'transparent')};
    white-space: nowrap;
`;

const KeySearch = styled.div`
    margin-left: 554px;
    width: 399px;
    height: 21px;
    padding: 0 8px 0 6px;
    display: flex;
    align-items: center;
    justify-content: space-between;
    background: #fff;
    border: 1px solid #e6e6e6;
    color: #a8a8a8;
    font-size: 13.5px;
`;

const HelpIcons = styled.div`
    display: flex;
    align-items: center;
    gap: 9px;
    margin-left: 11px;
`;

const Ribbon = styled.div`
    display: flex;
    height: 122px;
    background: #fafafa;
    border-top: 1px solid #eee;
    border-bottom: 2px solid #e2e2e2;
`;

const Group = styled.div<{ $w: number }>`
    width: ${p => p.$w}px;
    flex: none;
    display: flex;
    flex-direction: column;
    margin: 2px 0 4px;
    border-right: 1px solid #ddd;
`;

const GroupBody = styled.div<{ $pad: number }>`
    height: 94px;
    flex: none;
    display: flex;
    padding-left: ${p => p.$pad}px;
`;

const GroupLabel = styled.div`
    height: 20px;
    line-height: 20px;
    text-align: center;
    font-size: 15px;
    color: #444;
`;

const Col = styled.div<{ $w: number }>`
    width: ${p => p.$w}px;
    flex: none;
`;

const Item = styled.div<{ $off?: boolean }>`
    display: flex;
    align-items: center;
    gap: 4px;
    height: 29px;
    font-size: 15px;
    white-space: nowrap;
    color: ${p => (p.$off ? '#b9b9b9' : '#3c3c3c')};
    svg { opacity: ${p => (p.$off ? 0.35 : 1)}; }
`;

const BigBtn = styled.div<{ $w: number; $off?: boolean }>`
    position: relative;
    width: ${p => p.$w}px;
    flex: none;
    display: flex;
    flex-direction: column;
    align-items: center;
    font-size: 15px;
    white-space: nowrap;
    color: ${p => (p.$off ? '#b9b9b9' : '#3c3c3c')};
    svg { opacity: ${p => (p.$off ? 0.4 : 1)}; }
`;

const BigIconSlot = styled.div`
    height: 48px;
    display: flex;
    align-items: center;
    justify-content: center;
`;

const MoreCaret = styled.div`
    margin-top: 2px;
    line-height: 10px;
`;

const DrawGrid = styled.div`
    height: 94px;
    flex: none;
    display: grid;
    grid-template-columns: 26px 26px;
    grid-auto-rows: 29px;
    align-content: start;
    column-gap: 14px;
    padding-left: 8px;
`;

const DrawBtn = styled.div<{ $on?: boolean }>`
    display: flex;
    align-items: center;
    justify-content: center;
    gap: 1px;
    border-radius: 2px;
    background: ${p => (p.$on ? '#c6dcf6' : 'transparent')};
`;

const Caret = styled.i<{ $dark?: boolean }>`
    display: inline-block;
    flex: none;
    margin-left: 6px;
    vertical-align: middle;
    border-style: solid;
    border-width: 4px 3px 0;
    border-color: ${p => (p.$dark ? '#555' : '#888')} transparent transparent;
`;

const FilterBar = styled.div`
    display: flex;
    align-items: center;
    height: 32px;
    padding-left: 3px;
    background: #ececec;
    font-size: 15px;
`;

const Select = styled.div`
    width: 122px;
    height: 26px;
    margin-right: 5px;
    padding: 0 6px 0 5px;
    display: flex;
    align-items: center;
    justify-content: space-between;
    background: #fff;
    border-radius: 3px;
    font-size: 15px;
`;

const CheckBox = styled.i`
    display: block;
    width: 17px;
    height: 17px;
    border: 1px solid #aaa;
    border-radius: 3px;
    background: #fff;
    flex: none;
`;

const PointLabel = styled.span`
    margin-left: 4px;
`;

const LengthLabel = styled.span`
    margin-left: 4px;
    color: #777;
    font-size: 14px;
`;

const LengthValue = styled.span`
    margin-left: 1px;
    padding-left: 3px;
    width: 60px;
    height: 26px;
    line-height: 26px;
    background: #fff;
`;

const Work = styled.div`
    display: flex;
    height: 786px;
`;

const NavPanel = styled.div`
    width: 261px;
    margin-top: 3px;
    display: flex;
    flex-direction: column;
    background: #fff;
    border-right: 1px solid #ddd;
    flex: none;
`;

const PanelBar = styled.div`
    height: 15px;
    display: flex;
    align-items: center;
    justify-content: flex-end;
    padding-right: 3px;
    background: #e2e2e2;
    flex: none;
`;

const NavTitle = styled.div`
    height: 28px;
    line-height: 28px;
    padding-left: 10px;
    background: #f0f0f0;
    color: #8a8a8a;
    border-bottom: 1px solid #e2e2e2;
    font-size: 15px;
    flex: none;
`;

const NavTools = styled.div`
    height: 35px;
    padding: 0 2px 0 7px;
    display: flex;
    align-items: center;
    border-bottom: 2px solid #e6e6e6;
    flex: none;
`;

const NavToolBtn = styled.div<{ $first?: boolean }>`
    width: 30px;
    height: 27px;
    margin-left: ${p => (p.$first ? 'auto' : '5px')};
    display: flex;
    align-items: center;
    justify-content: center;
    border-radius: 4px;
    background: #cfe2f7;
`;

const NavList = styled.div`
    position: relative;
    flex: 1;
    overflow: hidden;
    padding-top: 1px;
    display: flex;
    flex-direction: column;
`;

const NavRoot = styled.div`
    display: flex;
    align-items: center;
    height: 30px;
    padding-left: 14px;
    font-size: 15px;
    position: relative;
    flex: none;
`;

const Arrow = styled.i<{ $open?: boolean }>`
    display: block;
    flex: none;
    width: 0;
    height: 0;
    margin-right: ${p => (p.$open ? 8 : 10)}px;
    border-style: solid;
    border-width: ${p => (p.$open ? '5px 4px 0' : '4px 0 4px 5px')};
    border-color: ${p => (p.$open ? '#777 transparent transparent' : 'transparent transparent transparent #777')};
`;

const RedDot = styled.i`
    width: 7px;
    height: 7px;
    margin: -12px 0 0 1px;
    border-radius: 50%;
    background: #f00;
`;

const NavChild = styled.div<{ $on?: boolean }>`
    display: flex;
    align-items: center;
    gap: 8px;
    height: 26px;
    margin: 2px 36px 2px 50px;
    padding-left: 4px;
    font-size: 15px;
    border-radius: 3px;
    white-space: nowrap;
    flex: none;
    background: ${p => (p.$on ? '#c2d9f3' : 'transparent')};
`;

const NavScroll = styled.div`
    position: absolute;
    left: 246px;
    top: 21px;
    width: 10px;
    height: 567px;
    border-radius: 5px;
    background: #cfcfcf;
`;

const MidCol = styled.div`
    width: 350px;
    margin: 3px 0 0 6px;
    display: flex;
    flex-direction: column;
    gap: 5px;
    flex: none;
`;

const CompPanel = styled.div`
    height: 253px;
    display: flex;
    flex-direction: column;
    background: #fff;
    border: 1px solid #ddd;
    border-top: none;
`;

const Tabs = styled.div`
    display: flex;
    height: 28px;
    background: #f2f2f2;
    flex: none;
    border-bottom: 1px solid #ddd;
`;

const Tab = styled.div<{ $on?: boolean }>`
    width: 81px;
    text-align: center;
    line-height: 27px;
    font-size: 15px;
    font-weight: ${p => (p.$on ? 700 : 400)};
    color: ${p => (p.$on ? '#444' : '#9a9a9a')};
    background: ${p => (p.$on ? '#f5f5f5' : '#e0e0e0')};
    border-right: 1px solid #d6d6d6;
`;

const CompTools = styled.div`
    display: flex;
    align-items: center;
    height: 34px;
    padding-left: 4px;
    border-bottom: 2px solid #eee;
    font-size: 15px;
    flex: none;
`;

const CompTool = styled.div<{ $w: number }>`
    width: ${p => p.$w}px;
    display: flex;
    align-items: center;
    gap: 5px;
    white-space: nowrap;
`;

const MoreBtn = styled.div`
    width: 14px;
    height: 26px;
    margin-left: 7px;
    display: flex;
    align-items: center;
    justify-content: center;
    border: 1px solid #eee;
    border-radius: 3px;
    color: #555;
`;

const CompSearch = styled.div`
    height: 25px;
    padding: 0 10px 0 3px;
    display: flex;
    align-items: center;
    justify-content: space-between;
    font-size: 15px;
    color: #aaa;
    border-bottom: 2px solid #eee;
    flex: none;
`;

const CompTree = styled.div`
    position: relative;
    flex: 1;
    overflow: hidden;
    padding-top: 2px;
    display: flex;
    flex-direction: column;
`;

const CompHead = styled.div`
    display: flex;
    align-items: center;
    height: 30px;
    padding-left: 17px;
    font-size: 15px;
    flex: none;
`;

const CompRow = styled.div<{ $on?: boolean }>`
    height: 26px;
    line-height: 26px;
    width: 137px;
    margin: 2px 0 2px 50px;
    padding-left: 4px;
    border-radius: 3px;
    white-space: nowrap;
    font-size: 15px;
    flex: none;
    background: ${p => (p.$on ? '#c2d9f3' : 'transparent')};
`;

const CompThumb = styled.div`
    position: absolute;
    left: 333px;
    top: 20px;
    width: 10px;
    height: 21px;
    border-radius: 5px;
    background: #cfcfcf;
`;

const PropPanel = styled.div`
    position: relative;
    flex: 1;
    display: flex;
    flex-direction: column;
    background: #fff;
    border: 1px solid #ddd;
    border-top: none;
`;

const propCols = '28px 126px 124px 50px';

const PropHead = styled.div`
    display: grid;
    grid-template-columns: ${propCols};
    height: 26px;
    flex: none;
`;

const PropHeadCell = styled.div<{ $on?: boolean }>`
    text-align: center;
    line-height: 26px;
    font-size: 15px;
    color: ${p => (p.$on ? '#fff' : '#444')};
    background: ${p => (p.$on ? '#74b1f3' : '#fff')};
    border-left: 1px solid #e2e2e2;
    border-right: 1px solid #e2e2e2;
    border-bottom: 1px solid #ddd;
`;

const PropLine = styled.div`
    display: grid;
    grid-template-columns: ${propCols};
    height: 26.3px;
    flex: none;
    border-bottom: 2px solid #e6e6e6;
    font-size: 15px;
`;

const PropNo = styled.div<{ $on?: boolean }>`
    margin-bottom: -2px;
    text-align: center;
    line-height: 26px;
    font-size: 15px;
    font-weight: ${p => (p.$on ? 700 : 400)};
    color: ${p => (p.$on ? '#fff' : '#555')};
    background: ${p => (p.$on ? '#74b1f3' : '#ededed')};
`;

const PropName = styled.div<{ $kind?: string; $link?: boolean }>`
    position: relative;
    display: flex;
    align-items: center;
    gap: 7px;
    white-space: nowrap;
    padding-left: ${p => (p.$kind === 'child' ? 40 : 4)}px;
    color: ${p => (p.$link ? '#2a62e0' : '#3c3c3c')};
    border-right: 1px solid #e2e2e2;

    &::before {
        content: ${p => (p.$kind === 'child' ? "''" : 'none')};
        position: absolute;
        left: 11px;
        top: -2px;
        bottom: 11px;
        width: 18px;
        border-left: 1px solid #e6e6e6;
        border-bottom: 1px solid #e6e6e6;
    }
`;

const Toggle = styled.i`
    display: flex;
    align-items: center;
    justify-content: center;
    width: 16px;
    height: 16px;
    border: 1px solid #aaa;
    border-radius: 2px;
    font-style: normal;
    font-size: 12px;
    line-height: 1;
    background: #fff;
    color: #444;
    flex: none;
`;

const PropValue = styled.div<{ $sel?: boolean; $dim?: boolean; $tight?: boolean }>`
    display: flex;
    align-items: center;
    justify-content: space-between;
    padding: 0 3px 0 ${p => (p.$sel ? 2 : 4)}px;
    white-space: nowrap;
    overflow: hidden;
    letter-spacing: ${p => (p.$tight ? '-0.4px' : '0')};
    color: ${p => (p.$dim ? '#aaa' : '#3c3c3c')};
    border-right: 1px solid #e2e2e2;
    ${p => (p.$sel ? 'outline: 2px solid #6aa9ee; outline-offset: -2px;' : '')}
`;

const EllipsisBtn = styled.span`
    display: flex;
    align-items: center;
    justify-content: center;
    width: 18px;
    height: 16px;
    color: #2c7fe2;
    background: #d6e7fa;
    border: 1px solid #74b1f3;
    border-radius: 3px;
    flex: none;
`;

const PropCheck = styled.div`
    display: flex;
    align-items: center;
    justify-content: center;
    border-right: 1px solid #e2e2e2;
`;

const PropGutter = styled.div`
    flex: 1;
    width: 28px;
    background: #ededed;
`;

const PropScroll = styled.div`
    position: absolute;
    left: 333px;
    top: 247px;
    width: 10px;
    height: 259px;
    border-radius: 5px;
    background: #cfcfcf;
`;

const Splitter = styled.div`
    width: 4px;
    flex: none;
    display: flex;
    align-items: center;
`;

const SplitGrip = styled.div`
    width: 4px;
    height: 130px;
    background: #333;
    margin-top: -65px;
`;

const Canvas = styled.div`
    position: relative;
    flex: 1;
    margin-top: 2px;
    background: #000;
    overflow: hidden;
`;

const CanvasSvg = styled.svg`
    display: block;
    font-family: "Noto Sans", sans-serif;
`;

const AxisText = styled.text`
    fill: #ececec;
    font-size: 24px;
`;

const AxisLetter = styled.text`
    font-size: 24px;
`;

const SideTools = styled.div`
    position: absolute;
    right: 0;
    top: 1px;
    width: 30px;
    height: 306px;
    padding: 16px 0 0 7px;
    background: #fff;
    border-radius: 4px 0 0 4px;
    display: flex;
    flex-direction: column;
    overflow: hidden;
`;

const SideIcon = styled.div`
    height: 26px;
    margin-bottom: 9px;
    flex: none;
`;

const SideCaret = styled.div`
    height: 12px;
    margin: -4px 0 3px;
    flex: none;
`;

const SideRule = styled.div`
    height: 1px;
    width: 30px;
    margin: -2px 0 9px;
    background: #aaa;
    flex: none;
`;

const StatusBar = styled.div`
    display: flex;
    align-items: center;
    height: 38px;
    background: #fafafa;
    font-size: 14px;
    color: #555;
`;

const StatusText = styled.span<{ $ml?: number; $w: number }>`
    width: ${p => p.$w}px;
    margin-left: ${p => p.$ml ?? 0}px;
    flex: none;
`;

const ModeBtn = styled.div<{ $w: number; $on?: boolean }>`
    width: ${p => p.$w}px;
    height: 31px;
    margin-right: 5px;
    display: flex;
    align-items: center;
    justify-content: center;
    gap: 1px;
    flex: none;
    border: 1px solid ${p => (p.$on ? '#8db9ee' : '#bbb')};
    border-radius: 4px;
    background: ${p => (p.$on ? '#d6e7fa' : '#fff')};
    i { margin-left: 3px; }
`;

const StatusHint = styled.span`
    margin-left: 4px;
    color: #444;
`;

const Dialog = styled.div`
    position: absolute;
    left: 692px;
    top: 170px;
    width: 878px;
    height: 663px;
    display: flex;
    flex-direction: column;
    background: linear-gradient(#fff 0, #f8f8f8 28px, #ebebeb 70px, #e6e6e6 100%);
    box-shadow: 0 0 4px rgba(0, 0, 0, 0.25);
`;

const DialogTitle = styled.div`
    height: 50px;
    padding: 0 15px;
    display: flex;
    align-items: center;
    justify-content: space-between;
    font-size: 15px;
    flex: none;
`;

const DialogTabs = styled.div`
    height: 31px;
    padding-left: 15px;
    display: flex;
    align-items: flex-end;
    gap: 5px;
    flex: none;
`;

const DialogTab = styled.div<{ $on?: boolean }>`
    width: ${p => (p.$on ? 44 : 45)}px;
    height: ${p => (p.$on ? 31 : 28)}px;
    text-align: center;
    line-height: ${p => (p.$on ? 31 : 28)}px;
    font-size: 15px;
    border-radius: 3px 3px 0 0;
    color: ${p => (p.$on ? '#2a7be0' : '#555')};
    background: ${p => (p.$on ? '#fff' : '#e6e6e6')};
`;

const CalcTable = styled.div`
    height: 522px;
    margin: 0 14px 0 15px;
    background: #fff;
    border: 2px solid #d2d2d2;
    flex: none;
`;

const calcCols = '25px 351px 1fr';

const CalcHead = styled.div`
    display: grid;
    grid-template-columns: ${calcCols};
    height: 26px;
    background: #efefef;
    border-bottom: 2px solid #ddd;
`;

const CalcHeadCell = styled.div`
    text-align: center;
    line-height: 24px;
    font-size: 15px;
    border-left: 1px solid #d8d8d8;
`;

const CalcLine = styled.div`
    display: grid;
    grid-template-columns: ${calcCols};
    height: 26.2px;
    border-bottom: 2px solid #e2e2e2;
    font-size: 15px;
`;

const CalcNo = styled.div`
    text-align: center;
    line-height: 25px;
    color: #555;
    background: #efefef;
`;

const CalcDesc = styled.div<{ $group?: boolean }>`
    position: relative;
    display: flex;
    align-items: center;
    gap: 9px;
    padding-left: ${p => (p.$group ? 3 : 38)}px;
    white-space: nowrap;
    background: #fffde8;
    border-left: 1px solid #d8d8d8;
    border-right: 1px solid #d8d8d8;

    &::before {
        content: ${p => (p.$group ? 'none' : "''")};
        position: absolute;
        left: 10px;
        top: -2px;
        bottom: 11px;
        width: 21px;
        border-left: 1px solid #e8e6c8;
        border-bottom: 1px solid #e0e0d0;
    }
`;

const CalcValue = styled.div<{ $off?: boolean }>`
    padding-left: 4px;
    line-height: 25px;
    white-space: nowrap;
    color: ${p => (p.$off ? '#aaa' : '#3c3c3c')};
    background: ${p => (p.$off ? '#e6e6e6' : '#fff')};
`;

const DialogFoot = styled.div`
    display: flex;
    align-items: flex-start;
    gap: 14px;
    padding: 15px 15px 0;
`;

const FootSpacer = styled.div`
    flex: 1;
`;

const FootBtn = styled.div<{ $primary?: boolean }>`
    width: ${p => (p.$primary ? 100 : 98)}px;
    height: ${p => (p.$primary ? 32 : 30)}px;
    margin-top: ${p => (p.$primary ? -1 : 0)}px;
    text-align: center;
    line-height: ${p => (p.$primary ? 32 : 30)}px;
    font-size: 15px;
    border-radius: 3px;
    color: ${p => (p.$primary ? '#fff' : '#444')};
    background: ${p => (p.$primary ? '#2f82e4' : '#fff')};
    border: ${p => (p.$primary ? 'none' : '1px solid #e0e0e0')};
`;

const Grip = styled.i`
    position: absolute;
    right: 2px;
    bottom: 2px;
    width: 9px;
    height: 9px;
    background-image: radial-gradient(#888 1px, transparent 1.2px);
    background-size: 3px 3px;
`;

export default App;
